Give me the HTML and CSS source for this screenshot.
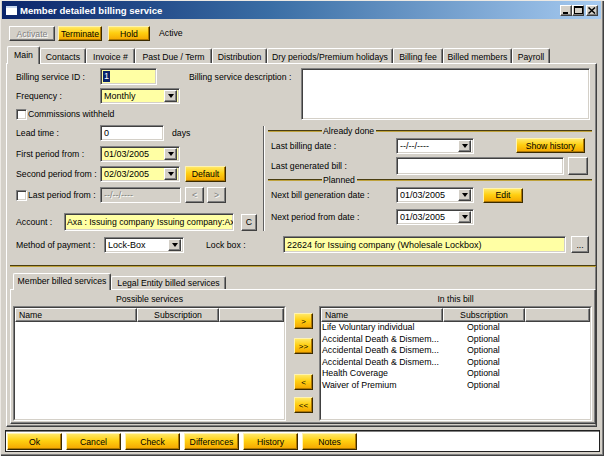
FILE: index.html
```html
<!DOCTYPE html>
<html>
<head>
<meta charset="utf-8">
<title>Member detailed billing service</title>
<link rel="stylesheet" href="styles.css">
</head>
<body>
<div class="window">
  <div class="titlebar">
    <span class="appicon"></span>
    <span class="title">Member detailed billing service</span>
    <div class="wctrls">
      <span class="wbtn"><svg width="8" height="7" viewBox="0 0 8 7"><rect x="1" y="5" width="5" height="2" fill="#000"/></svg></span>
      <span class="wbtn"><svg width="9" height="8" viewBox="0 0 9 8"><rect x="0.5" y="0.5" width="8" height="7" fill="none" stroke="#000"/><rect x="0" y="0" width="9" height="2" fill="#000"/></svg></span>
      <span class="wbtn wclose"><svg width="8" height="7" viewBox="0 0 8 7"><path d="M0.5 0.5 L7 6.5 M7 0.5 L0.5 6.5" stroke="#000" stroke-width="1.5"/></svg></span>
    </div>
  </div>
  <div class="content">
    <div class="toolbar">
      <button class="gbtn disabled b-activate">Activate</button>
      <button class="ybtn b-term">Terminate</button>
      <button class="ybtn b-hold">Hold</button>
      <span class="status">Active</span>
    </div>
    <div class="tabstrip">
      <span class="tab active t-main">Main</span>
      <span class="tab t-contacts">Contacts</span>
      <span class="tab t-invoice">Invoice #</span>
      <span class="tab t-past">Past Due / Term</span>
      <span class="tab t-dist">Distribution</span>
      <span class="tab t-dry">Dry periods/Premium holidays</span>
      <span class="tab t-fee">Billing fee</span>
      <span class="tab t-billed">Billed members</span>
      <span class="tab t-payroll">Payroll</span>
    </div>
    <div class="tabpanel">
      <div class="secA">
        <div class="colA">
          <div class="row r-id">
            <span class="lbl l84">Billing service ID :</span>
            <span class="field yellow f-id"><span class="sel-text">1</span></span>
          </div>
          <div class="row r-freq">
            <span class="lbl l84">Frequency :</span>
            <span class="field yellow combo"><span class="ctext">Monthly</span><span class="arrow"><i></i></span></span>
          </div>
          <div class="row r-comm">
            <span class="check"></span><span class="clbl">Commissions withheld</span>
          </div>
        </div>
        <span class="lbl desc-lbl">Billing service description :</span>
        <span class="field white desc"></span>
      </div>

      <div class="secB">
        <div class="colB">
          <div class="row r16">
            <span class="lbl l84">Lead time :</span>
            <span class="field white f-lead">0</span>
            <span class="days">days</span>
          </div>
          <div class="row r16 mt5">
            <span class="lbl l84">First period from :</span>
            <span class="field yellow combo"><span class="ctext">01/03/2005</span><span class="arrow"><i></i></span></span>
          </div>
          <div class="row r16 mt4">
            <span class="lbl l84">Second period from :</span>
            <span class="field yellow combo"><span class="ctext">02/03/2005</span><span class="arrow"><i></i></span></span>
            <button class="ybtn b-default">Default</button>
          </div>
          <div class="row r16 mt5">
            <span class="lastlbl"><span class="check"></span><span class="clbl">Last period from :</span></span>
            <span class="field grayf f-last">--/--/----</span>
            <button class="gbtn disabled b-nav b-prev">&lt;</button>
            <button class="gbtn disabled b-nav b-next">&gt;</button>
          </div>
          <div class="row r-acct">
            <span class="lbl l48">Account :</span>
            <span class="field yellow f-acct">Axa : Issuing company Issuing company:Ax</span>
            <button class="gbtn b-c">C</button>
          </div>
        </div>

        <div class="group">
          <div class="gtitle"><span class="gline gl-left"></span><span class="gtext">Already done</span><span class="gline gl-right"></span></div>
          <div class="row grow r17 mt1">
            <span class="lbl glbl">Last billing date :</span>
            <span class="field white combo c78"><span class="ctext">--/--/----</span><span class="arrow"><i></i></span></span>
            <button class="ybtn b-history">Show history</button>
          </div>
          <div class="row grow r18 mt3">
            <span class="lbl glbl">Last generated bill :</span>
            <span class="field white f-lastbill"></span>
            <button class="gbtn b-dots">&nbsp;</button>
          </div>
          <div class="gtitle mt4"><span class="gline gl-left"></span><span class="gtext">Planned</span><span class="gline gl-right"></span></div>
          <div class="row grow r16 mt2">
            <span class="lbl glbl">Next bill generation date :</span>
            <span class="field white combo c78"><span class="ctext">01/03/2005</span><span class="arrow"><i></i></span></span>
            <button class="ybtn b-edit">Edit</button>
          </div>
          <div class="row grow r16 mt6">
            <span class="lbl glbl">Next period from date :</span>
            <span class="field white combo c78"><span class="ctext">01/03/2005</span><span class="arrow"><i></i></span></span>
          </div>
        </div>
      </div>

      <div class="row r-method">
        <span class="lbl l88">Method of payment :</span>
        <span class="field white combo"><span class="ctext">Lock-Box</span><span class="arrow"><i></i></span></span>
        <span class="lbl lockbox-lbl">Lock box :</span>
        <span class="field yellow f-lockbox">22624 for Issuing company (Wholesale Lockbox)</span>
        <button class="gbtn b-lockdots">...</button>
      </div>

      <div class="separator"></div>

      <div class="subtabs">
        <span class="tab stab active st-member">Member billed services</span>
        <span class="tab stab st-legal">Legal Entity billed services</span>
      </div>
      <div class="subpanel">
        <div class="lcol">
          <div class="caption">Possible services</div>
          <div class="list">
            <div class="list-inner">
              <div class="lhead">
                <span class="hcell h-name">Name</span>
                <span class="hcell h-sub">Subscription</span>
                <span class="hcell h-rest"></span>
              </div>
            </div>
          </div>
        </div>
        <div class="movecol">
          <button class="ybtn mv mv1">&gt;</button>
          <button class="ybtn mv mv2">&gt;&gt;</button>
          <button class="ybtn mv mv3">&lt;</button>
          <button class="ybtn mv mv4">&lt;&lt;</button>
        </div>
        <div class="rcol">
          <div class="caption">In this bill</div>
          <div class="list">
            <div class="list-inner">
              <div class="lhead">
                <span class="hcell h-name2">Name</span>
                <span class="hcell h-sub2">Subscription</span>
                <span class="hcell h-rest"></span>
              </div>
              <div class="lrows">
                <div class="lrow"><span class="c-name">Life Voluntary individual</span><span>Optional</span></div>
                <div class="lrow"><span class="c-name">Accidental Death &amp; Dismem...</span><span>Optional</span></div>
                <div class="lrow"><span class="c-name">Accidental Death &amp; Dismem...</span><span>Optional</span></div>
                <div class="lrow"><span class="c-name">Accidental Death &amp; Dismem...</span><span>Optional</span></div>
                <div class="lrow"><span class="c-name">Health Coverage</span><span>Optional</span></div>
                <div class="lrow"><span class="c-name">Waiver of Premium</span><span>Optional</span></div>
              </div>
            </div>
          </div>
        </div>
      </div>
    </div>

    <div class="footer">
      <button class="ybtn fbtn">Ok</button>
      <button class="ybtn fbtn">Cancel</button>
      <button class="ybtn fbtn">Check</button>
      <button class="ybtn fbtn">Differences</button>
      <button class="ybtn fbtn">History</button>
      <button class="ybtn fbtn">Notes</button>
    </div>
  </div>
</div>
</body>
</html>
```

FILE: styles.css
```css
* { box-sizing: border-box; margin: 0; padding: 0; }
html, body { width: 604px; height: 456px; overflow: hidden; }
body {
  font-family: "Liberation Sans", Arial, sans-serif;
  font-size: 8.7px;
  color: #000;
  background: #d4d0c8;
}
button { font: inherit; color: inherit; cursor: default; }

.window {
  width: 604px;
  height: 456px;
  background: #d4d0c8;
  padding: 1px 3px 0 2px;
  box-shadow: inset 1px 1px #ece9e4, inset -1px -1px #404040, inset -2px -2px #808080;
}

/* title bar */
.titlebar {
  height: 18px;
  display: flex;
  align-items: center;
  padding-left: 4px;
  background: linear-gradient(90deg, #0a246a 0%, #3a6ea5 45%, #a6caf0 100%);
}
.appicon {
  width: 11px;
  height: 9px;
  background: #fff;
  border-top: 2px solid #c8d8f0;
}
.title {
  color: #fff;
  font-weight: bold;
  font-size: 9.6px;
  margin-left: 3px;
}
.wctrls { margin-left: auto; margin-right: 3px; display: flex; }
.wbtn {
  width: 12px;
  height: 11px;
  display: flex;
  align-items: center;
  justify-content: center;
  background: #d4d0c8;
  border: 1px solid;
  border-color: #fff #404040 #404040 #fff;
  box-shadow: inset -1px -1px #808080;
}
.wclose { margin-left: 2px; }

.content { padding: 0 4px 0 4px; }

/* generic buttons */
.gbtn {
  background: #d4d0c8;
  border: 1px solid;
  border-color: #fff #404040 #404040 #fff;
  box-shadow: inset -1px -1px #808080;
  display: flex;
  align-items: center;
  justify-content: center;
}
.gbtn.disabled { color: #808080; text-shadow: 1px 1px #fff; }
.ybtn {
  background: linear-gradient(#ffe866 0%, #ffcf10 45%, #f4a600 100%);
  border: 1px solid;
  border-color: #fff3b0 #3a2a00 #3a2a00 #fff3b0;
  box-shadow: inset -1px -1px #b07800;
  display: flex;
  align-items: center;
  justify-content: center;
}

/* toolbar */
.toolbar {
  height: 27px;
  padding: 7px 0 0 3px;
  display: flex;
  align-items: flex-start;
}
.toolbar button { height: 15px; }
.b-activate { width: 46px; }
.b-term { width: 44px; margin-left: 3px; }
.b-hold { width: 42px; margin-left: 6px; }
.status { margin-left: 9px; line-height: 15px; }

/* tabs */
.tabstrip {
  height: 17px;
  display: flex;
  align-items: flex-end;
  padding-left: 1px;
}
.tab {
  height: 15px;
  display: flex;
  align-items: center;
  justify-content: center;
  background: #d4d0c8;
  border: 1px solid;
  border-bottom: none;
  border-color: #fff #404040 #404040 #fff;
  box-shadow: inset -1px 0 #808080;
  border-radius: 2px 2px 0 0;
  white-space: nowrap;
  padding-top: 1px;
}
.tab.active {
  height: 18px;
  margin-bottom: -1px;
  position: relative;
  z-index: 1;
  padding-bottom: 2px;
}
.t-main { width: 33px; }
.t-contacts { width: 46px; }
.t-invoice { width: 49px; }
.t-past { width: 77px; }
.t-dist { width: 55px; }
.t-dry { width: 126px; }
.t-fee { width: 50px; }
.t-billed { width: 69px; }
.t-payroll { width: 38px; }

.tabpanel {
  height: 364px;
  border: 1px solid;
  border-color: #fff #404040 #404040 #fff;
  box-shadow: inset -1px -1px #808080;
  padding: 4px 3px 0 9px;
  overflow: hidden;
}

/* rows & fields */
.row { display: flex; align-items: center; }
.lbl { white-space: nowrap; flex: none; }
.l84 { width: 84px; }
.l48 { width: 48px; }
.l88 { width: 88px; }
.mt1 { margin-top: 1px; }
.mt2 { margin-top: 2px; }
.mt3 { margin-top: 3px; }
.mt4 { margin-top: 4px; }
.mt5 { margin-top: 5px; }
.mt6 { margin-top: 6px; }
.r16 { height: 16px; }
.r17 { height: 17px; }
.r18 { height: 18px; }

.field {
  height: 16px;
  display: flex;
  align-items: center;
  padding-left: 3px;
  border: 1px solid;
  border-color: #808080 #fff #fff #808080;
  box-shadow: inset 1px 1px #404040, inset -1px -1px #d4d0c8;
  white-space: nowrap;
  overflow: hidden;
  flex: none;
  font-size: 9px;
}
.yellow { background: #ffffa4; }
.white { background: #fff; }
.grayf { background: #d4d0c8; color: #808080; text-shadow: 1px 1px #fff; }
.combo { width: 80px; padding-right: 2px; }
.c78 { width: 78px; }
.ctext { flex: 1; overflow: hidden; }
.arrow {
  width: 13px;
  height: 12px;
  flex: none;
  display: flex;
  align-items: center;
  justify-content: center;
  background: #d4d0c8;
  border: 1px solid;
  border-color: #fff #404040 #404040 #fff;
  box-shadow: inset -1px -1px #808080;
}
.arrow i {
  width: 0;
  height: 0;
  border-left: 3.5px solid transparent;
  border-right: 3.5px solid transparent;
  border-top: 4px solid #000;
}
.check {
  width: 11px;
  height: 11px;
  flex: none;
  background: #fff;
  border: 1px solid;
  border-color: #808080 #fff #fff #808080;
  box-shadow: inset 1px 1px #404040, inset -1px -1px #d4d0c8;
}
.clbl { margin-left: 1px; white-space: nowrap; }

/* section A */
.secA { display: flex; height: 54px; }
.colA { width: 173px; flex: none; }
.r-id { height: 17px; }
.f-id { width: 57px; height: 17px; padding-left: 2px; }
.sel-text { background: #0a246a; color: #fff; padding: 0 1px; line-height: 11px; }
.r-freq { height: 16px; margin-top: 3px; }
.r-comm { height: 12px; margin-top: 4px; }
.desc-lbl { width: 112px; padding-top: 4px; }
.desc { width: 289px; height: 52px; }

/* section B */
.secB { display: flex; margin-top: 3px; }
.colB { width: 247px; flex: none; }
.f-lead { width: 64px; }
.days { margin-left: 8px; }
.b-default { width: 41px; height: 16px; margin-left: 5px; }
.lastlbl { width: 84px; display: flex; align-items: center; flex: none; }
.f-last { width: 81px; }
.b-nav { width: 19px; height: 16px; }
.b-prev { margin-left: 4px; }
.b-next { margin-left: 3px; }
.r-acct { height: 18px; margin-top: 10px; }
.f-acct { width: 170px; height: 18px; font-size: 8.7px; padding-left: 2px; }
.b-c { width: 16px; height: 17px; margin-left: 7px; }

.group {
  flex: 1;
  margin-top: 1px;
  padding-bottom: 3px;
  border-left: 1px solid #606060;
  box-shadow: inset 1px 0 #fff;
}
.gtitle {
  height: 10px;
  display: flex;
  align-items: center;
  margin: 0 1px 0 4px;
}
.gline {
  height: 2px;
  border-top: 1px solid #4a3e12;
  border-bottom: 1px solid #bfa23c;
}
.gl-left { width: 54px; }
.gl-right { flex: 1; }
.gtext { padding: 0 2px 0 1px; white-space: nowrap; }
.glbl { width: 132px; padding-left: 7px; }
.b-history { width: 69px; height: 15px; margin-left: 42px; }
.f-lastbill { width: 168px; height: 18px; }
.b-dots { width: 20px; height: 18px; margin-left: 4px; }
.b-edit { width: 40px; height: 15px; margin-left: 9px; }

/* method of payment */
.r-method { height: 17px; margin-top: 5px; }
.lockbox-lbl { width: 77px; margin-left: 22px; }
.f-lockbox { width: 283px; height: 17px; }
.b-lockdots { width: 18px; height: 17px; margin-left: 5px; }

.separator {
  height: 2px;
  margin: 12px -3px 0 -6px;
  border-top: 1px solid #4a3e12;
  border-bottom: 1px solid #bfa23c;
}

/* sub tabs */
.subtabs {
  height: 16px;
  margin: 6px 0 0 -6px;
  padding-left: 3px;
  display: flex;
  align-items: flex-end;
}
.stab { height: 13px; padding-top: 0; }
.stab.active { height: 17px; }
.st-member { width: 98px; }
.st-legal { width: 115px; }

.subpanel {
  height: 135px;
  margin: 0 -3px 0 -6px;
  border: 1px solid;
  border-color: #fff #404040 #404040 #fff;
  box-shadow: inset -1px -1px #808080;
  padding: 2px 2px;
  display: flex;
}
.lcol { width: 273px; flex: none; }
.rcol { width: 273px; flex: none; margin-left: 6px; }
.caption { height: 14px; line-height: 14px; text-align: center; }
.list {
  height: 115px;
  border: 1px solid;
  border-color: #808080 #fff #fff #808080;
}
.list-inner {
  height: 100%;
  background: #fff;
  border: 1px solid;
  border-color: #404040 #d4d0c8 #d4d0c8 #404040;
}
.lhead { display: flex; height: 14px; }
.hcell {
  height: 14px;
  display: flex;
  align-items: center;
  background: #d4d0c8;
  border: 1px solid;
  border-color: #fff #404040 #404040 #fff;
  box-shadow: inset -1px -1px #808080;
  white-space: nowrap;
}
.h-name, .h-name2 { width: 122px; padding-left: 3px; }
.h-sub, .h-sub2 { width: 82px; justify-content: center; }
.h-rest { flex: 1; }

.movecol { width: 19px; flex: none; margin-left: 8px; display: flex; flex-direction: column; }
.mv { width: 19px; height: 16px; font-size: 8px; }
.mv1 { margin-top: 21px; }
.mv2 { margin-top: 9px; }
.mv3 { margin-top: 20px; }
.mv4 { margin-top: 7px; }

.lrows { padding: 0 0 0 1px; font-size: 8.8px; }
.lrow { display: flex; height: 11.6px; line-height: 11.6px; white-space: nowrap; }
.c-name { width: 145px; }

/* footer */
.footer {
  height: 22px;
  margin: 3px -3px 0 -1px;
  background: #fff;
  border: 1px solid #202020;
  box-shadow: inset 0 1px #808080;
  padding: 2px 0 0 1px;
  display: flex;
  gap: 4px;
}
.fbtn { width: 55px; height: 17px; }
```
